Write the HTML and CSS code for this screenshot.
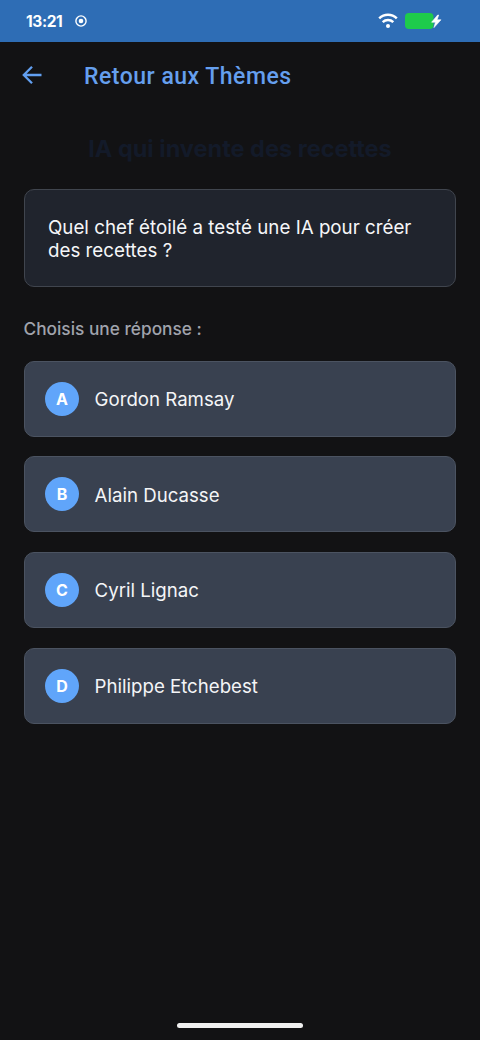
FILE: index.html
```html
<!DOCTYPE html>
<html lang="fr">
<head>
<meta charset="utf-8">
<title>Quiz</title>
<link rel="stylesheet" href="styles.css">
</head>
<body>
<div class="screen">
  <div class="status-bar">
    <span class="clock">13:21</span>
    <svg class="record" width="12" height="12" viewBox="0 0 12 12"><circle cx="6" cy="6" r="5.1" fill="none" stroke="#fff" stroke-width="1.4"/><circle cx="6" cy="6" r="2.3" fill="#fff"/></svg>
    <svg class="wifi" width="20" height="16" viewBox="0 0 20 16"><g fill="none" stroke="#fff" stroke-width="2.5"><path d="M1.2 5.4C6.2.6 13.8.6 18.8 5.4"/><path d="M4.7 9.2C7.7 6.4 12.3 6.4 15.3 9.2"/></g><circle cx="10" cy="13" r="2" fill="#fff"/></svg>
    <svg class="battery" width="38" height="18" viewBox="0 0 38 18"><rect x="0" y="1" width="28.5" height="16" rx="4" fill="#1ecb4b"/><path d="M32.7 3L26.6 10.2H30.4L29 15.6L36 7.8H32.1L33.7 3Z" fill="#fff" stroke="#fff" stroke-width=".6" stroke-linejoin="round"/></svg>
  </div>
  <header class="app-bar">
    <svg class="back" width="20" height="20" viewBox="0 0 20 20"><path d="M19.5 10H2M10 1.8L1.8 10L10 18.2" fill="none" stroke="#629ff0" stroke-width="2.3"/></svg>
    <span class="app-title">Retour aux Thèmes</span>
  </header>
  <main class="content">
    <h1 class="theme">IA qui invente des recettes</h1>
    <section class="question">Quel chef étoilé a testé une IA pour créer<br>des recettes ?</section>
    <p class="prompt">Choisis une réponse :</p>
    <div class="options">
      <div class="option"><span class="letter">A</span><span class="answer">Gordon Ramsay</span></div>
      <div class="option"><span class="letter">B</span><span class="answer">Alain Ducasse</span></div>
      <div class="option"><span class="letter">C</span><span class="answer">Cyril Lignac</span></div>
      <div class="option"><span class="letter">D</span><span class="answer">Philippe Etchebest</span></div>
    </div>
  </main>
  <div class="home-indicator"></div>
</div>
</body>
</html>
```

FILE: styles.css
```css
* { box-sizing: border-box; }
body { margin: 0; background: #121214; font-family: Inter, "Liberation Sans", sans-serif; }
.screen { width: 480px; height: 1040px; display: flex; flex-direction: column; align-items: stretch; }
.status-bar { height: 42px; flex: none; background: #2e6db5; display: flex; align-items: center; padding: 0 37px 0 26px; color: #fff; }
.clock { font-size: 15.5px; font-weight: 700; line-height: 20px; letter-spacing: -.4px; padding-top: 1px; }
.record { margin-left: 13px; }
.wifi { margin-left: auto; }
.battery { margin-left: 7px; }
.app-bar { height: 66px; flex: none; display: flex; align-items: center; padding: 0 22px; }
.app-title { margin-left: 42px; padding-top: 3px; font: 500 23px/28px Roboto, sans-serif; letter-spacing: .5px; color: #659fee; }
.content { padding: 26px 24px 0; }
.theme { margin: 0; text-align: center; font-size: 23.5px; line-height: 30px; font-weight: 700; color: #131a29; white-space: nowrap; }
.question { margin-top: 25px; height: 98px; border: 1px solid #40454e; border-radius: 10px; background: #20242d; padding: 27px 23px; font-size: 18.75px; line-height: 22.6px; color: #f5f6f8; white-space: nowrap; }
.prompt { margin: 31px 0 0 -.5px; font-size: 17.3px; line-height: 22px; font-weight: 500; color: #a0a3ac; }
.options { margin-top: 20.6px; display: grid; gap: 19.7px; }
.option { height: 76px; border: 1px solid #4b5361; border-radius: 10px; background: #394150; display: flex; align-items: center; padding: 0 20px; }
.letter { width: 34px; height: 34px; border-radius: 50%; background: #60a5fa; color: #fff; font-size: 16px; font-weight: 700; display: flex; align-items: center; justify-content: center; }
.answer { margin-left: 15.6px; padding-top: 1px; font-size: 18.65px; line-height: 24px; color: #f4f5f7; }
.home-indicator { width: 126px; height: 5px; border-radius: 3px; background: #f0f0f0; margin: auto auto 12px 177px; }
```
